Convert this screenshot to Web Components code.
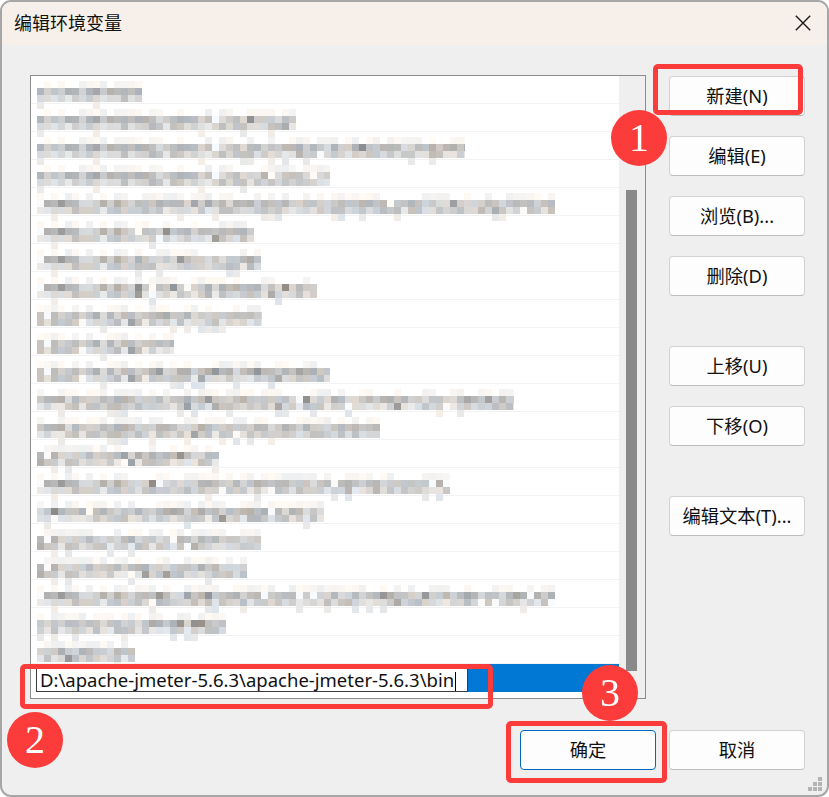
<!DOCTYPE html>
<html lang="zh-CN"><head><meta charset="utf-8"><title>编辑环境变量</title>
<style>
html,body{margin:0;padding:0;background:#fff;width:829px;height:797px;overflow:hidden;font-family:"Noto Sans","Noto Sans CJK SC",sans-serif}
</style></head><body>
<env-dialog>
  <title-bar slot="title">编辑环境变量</title-bar>
  <env-list slot="list" value="D:\apache-jmeter-5.6.3\apache-jmeter-5.6.3\bin"></env-list>
  <div slot="side">
    <dlg-button>新建(N)</dlg-button><dlg-button>编辑(E)</dlg-button><dlg-button>浏览(B)...</dlg-button><dlg-button>删除(D)</dlg-button>
  </div>
  <div slot="side">
    <dlg-button>上移(U)</dlg-button><dlg-button>下移(O)</dlg-button>
  </div>
  <div slot="side">
    <dlg-button>编辑文本(T)...</dlg-button>
  </div>
  <dlg-button slot="foot" primary>确定</dlg-button>
  <dlg-button slot="foot">取消</dlg-button>
  <mark-box slot="overlay" style="left:651px;top:62px;width:150px;height:51px"></mark-box>
  <mark-box slot="overlay" style="left:18px;top:662px;width:473px;height:45px"></mark-box>
  <mark-box slot="overlay" style="left:504px;top:719px;width:161px;height:62px"></mark-box>
  <step-badge slot="overlay" style="left:609px;top:108px">1</step-badge>
  <step-badge slot="overlay" style="left:5px;top:710px">2</step-badge>
  <step-badge slot="overlay" style="left:580px;top:663px">3</step-badge>
</env-dialog>
<script>
function def(name, css, html, init){
  customElements.define(name, class extends HTMLElement{
    connectedCallback(){
      if(this.shadowRoot) return;
      const r=this.attachShadow({mode:'open'});
      r.innerHTML='<style>'+css+'</style>'+html;
      if(init) init.call(this,r);
    }
  });
}
def('env-dialog',`
  :host{display:block;width:829px;height:797px;box-sizing:border-box;border:2px solid #a6a6a6;border-radius:11px;position:relative;background:#efefef;overflow:hidden}
  .body{display:flex;padding:30px 22px 0 28px;gap:23px}
  .side{display:flex;flex-direction:column;width:136px;padding-top:1px}
  ::slotted([slot=side]){display:flex;flex-direction:column;gap:20px;margin-bottom:50px}
  .foot{display:flex;justify-content:flex-end;gap:13px;padding:31px 22px 0 0}
  .grip{position:absolute;right:5px;bottom:4px;width:14px;height:14px;background:
    linear-gradient(#b4b4b4,#b4b4b4) 10px 0/4px 4px no-repeat,
    linear-gradient(#b4b4b4,#b4b4b4) 5px 5px/4px 4px no-repeat,
    linear-gradient(#b4b4b4,#b4b4b4) 10px 5px/4px 4px no-repeat,
    linear-gradient(#b4b4b4,#b4b4b4) 0 10px/4px 4px no-repeat,
    linear-gradient(#b4b4b4,#b4b4b4) 5px 10px/4px 4px no-repeat,
    linear-gradient(#b4b4b4,#b4b4b4) 10px 10px/4px 4px no-repeat}
`,`<slot name="title"></slot>
  <div class="body"><slot name="list"></slot><div class="side"><slot name="side"></slot></div></div>
  <div class="foot"><slot name="foot"></slot></div>
  <div class="grip"></div>
  <slot name="overlay"></slot>`);
def('title-bar',`
  :host{display:flex;align-items:center;justify-content:space-between;height:43px;background:#f7f0ea;padding:0 16px 0 12px;color:#111;font:18px "Noto Sans CJK SC","Noto Sans",sans-serif;box-sizing:border-box}
  svg{display:block}
`,`<span style="position:relative;top:-2px"><slot></slot></span>
  <svg width="16" height="16" viewBox="0 0 16 16" style="position:relative;top:-1px"><path d="M.8.8 15.2 15.2M15.2.8.8 15.2" stroke="#1a1a1a" stroke-width="1.4" fill="none"/></svg>`);
def('dlg-button',`
  :host{display:flex;align-items:center;justify-content:center;width:136px;height:40px;box-sizing:border-box;padding-bottom:2px;background:#fdfdfd;border:1px solid #d2d2d2;border-bottom-color:#bdbdbd;border-radius:4px;color:#111;font:18.3px "Noto Sans","Noto Sans CJK SC",sans-serif;white-space:nowrap}
  :host([primary]){border:1.5px solid #0067c0}
`,`<slot></slot>`);
def('mark-box',`
  :host{display:block;position:absolute;box-sizing:border-box;border:5px solid #fc3b3b;border-radius:5px;pointer-events:none}
`,``);
def('step-badge',`
  :host{display:flex;align-items:center;justify-content:center;position:absolute;width:56px;height:56px;border-radius:50%;background:#fc3b3b;color:#fff;font:40px/56px "Liberation Serif",serif}
`,`<slot></slot>`);
def('mosaic-row',`
  :host{display:block;height:28px;box-sizing:border-box;border-bottom:1px solid #f3f3f3;position:relative}
  canvas{position:absolute;left:6px;top:5px;filter:blur(.55px)}
`,`<canvas></canvas>`,function(r){
  const w=+this.getAttribute('w'), seed=+this.getAttribute('seed'), pre=+this.getAttribute('pre'), own=+this.getAttribute('own');
  const c=r.querySelector('canvas'); c.width=w; c.height=28;
  const g=c.getContext('2d');
  const rnd=s=>{let x=Math.sin(s*127.1+311.7)*43758.5453;return x-Math.floor(x)};
  const cols=Math.ceil(w/7);
  for(let i=0;i<cols;i++){
    const s=i<pre?seed*1000+i:own*1000+i;
    for(let j=0;j<4;j++){
      const a=rnd(s+j*37.3), b=rnd(s+j*91.7), d=rnd(s+j*11.1);
      let v;
      if(j===0){ if(b<.4) continue; v=232+a*18; }
      else if(j===3){ if(a<.86) continue; v=228+b*10; }
      else { v=(j===1?176:190)+a*44; if(d>.94) v-=38; if(d<.03) v=250; }
      const hue=(b-.5)*14;
      g.fillStyle='rgb('+(v+hue)+','+(v)+','+(v-hue)+')';
      g.fillRect(i*7,j*7,7,7);
    }
  }
});
const ROWS=[[1,30,105],[1,30,259],[1,30,428],[1,30,293],[2,14,518],[2,14,217],[2,14,224],[2,14,280],[3,16,225],[3,16,137],[3,16,293],[4,16,477],[4,16,343],[5,12,182],[2,14,413],[6,6,287],[5,8,224],[5,12,210],[2,14,518],[7,6,189],[8,4,98]];
def('env-list',`
  :host{display:block;width:616px;height:624px;box-sizing:border-box;border:1px solid #8c8c8c;position:relative;background:#fff}
  .wrap{display:flex;height:100%}
  .rows{flex:1;min-width:0}
  .sel{height:28px;background:#0078d4;position:relative}
  .edit{position:absolute;left:0;top:5px;width:437px;height:23px;box-sizing:border-box;padding-left:5px;background:#fff}
  .box{height:100%;box-sizing:border-box;border:1px solid #3c3c3c;border-top:0;padding:0 0 0 3px;font:18.5px/22px "Noto Sans",sans-serif;color:#111;white-space:nowrap;overflow:hidden}
  .caret{display:inline-block;width:1px;height:19px;background:#000;vertical-align:-4px;margin-left:1px}
  .bar{width:26px;background:#efefef;display:flex;flex-direction:column;align-items:center;padding-top:114px;box-sizing:border-box}
  .thumb{width:11px;height:481px;background:#8a8a8a;margin-left:-1px}
`,`<div class="wrap"><div class="rows"></div><div class="bar"><div class="thumb"></div></div></div>`,function(r){
  const rows=r.querySelector('.rows');
  ROWS.forEach((d,i)=>{
    const m=document.createElement('mosaic-row');
    m.setAttribute('seed',d[0]);m.setAttribute('pre',d[1]);m.setAttribute('own',100+i);m.setAttribute('w',d[2]);
    rows.appendChild(m);
  });
  const s=document.createElement('div');s.className='sel';
  const e=document.createElement('div');e.className='edit';
  const b=document.createElement('div');b.className='box';
  b.textContent=this.getAttribute('value');
  const c=document.createElement('span');c.className='caret';b.appendChild(c);
  e.appendChild(b);s.appendChild(e);rows.appendChild(s);
});
</script>
</body></html>
